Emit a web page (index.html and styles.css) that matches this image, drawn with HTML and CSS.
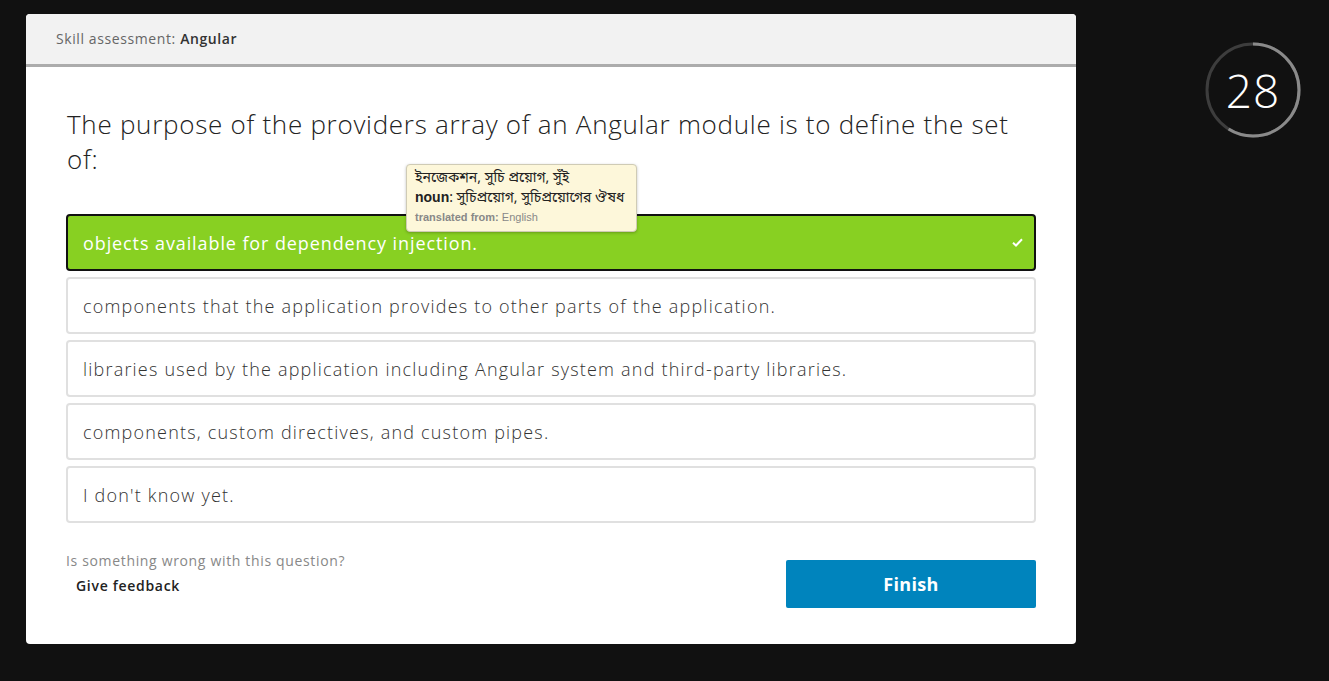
FILE: index.html
```html
<!DOCTYPE html>
<html lang="en">
<head>
<meta charset="utf-8">
<title>Skill assessment: Angular</title>
<link rel="stylesheet" href="styles.css">
</head>
<body>
<div class="page">
  <main class="card">
    <header class="card-header">Skill assessment: <strong>Angular</strong></header>
    <section class="card-body">
      <h1 class="question">The purpose of the providers array of an Angular module is to define the set of:</h1>
      <div class="options">
        <div class="option selected">
          <span>objects available for dependency injection.</span>
          <svg class="check" width="11" height="9" viewBox="0 0 11 9"><path d="M1 4.8 L4 7.5 L10 1.2" fill="none" stroke="#fff" stroke-width="2"/></svg>
          <div class="tooltip">
            <div class="tt-line">ইনজেকশন, সুচি প্রয়োগ, সুঁই</div>
            <div class="tt-line"><b>noun</b>: সুচিপ্রয়োগ, সুচিপ্রয়োগের ঔষধ</div>
            <div class="tt-from"><b>translated from:</b> English</div>
          </div>
        </div>
        <div class="option"><span>components that the application provides to other parts of the application.</span></div>
        <div class="option"><span>libraries used by the application including Angular system and third-party libraries.</span></div>
        <div class="option"><span>components, custom directives, and custom pipes.</span></div>
        <div class="option"><span>I don't know yet.</span></div>
      </div>
      <div class="footer">
        <div class="feedback">
          <div class="feedback-q">Is something wrong with this question?</div>
          <div class="feedback-link">Give feedback</div>
        </div>
        <button class="finish">Finish</button>
      </div>
    </section>
  </main>
  <div class="timer">
    <svg class="ring" width="96" height="96" viewBox="0 0 96 96">
      <circle cx="48" cy="48" r="46" fill="none" stroke="#3d3d3d" stroke-width="3"/>
      <circle cx="48" cy="48" r="46" fill="none" stroke="#8a8a8a" stroke-width="3" stroke-dasharray="170 400" transform="rotate(-90 48 48)"/>
    </svg>
    <span class="timer-num">28</span>
  </div>
</div>
</body>
</html>
```

FILE: styles.css
```css
html, body {
  margin: 0;
  padding: 0;
  background: #111111;
  height: 100%;
}
body {
  font-family: "Open Sans", "Liberation Sans", sans-serif;
}
.page {
  display: flex;
  align-items: flex-start;
  gap: 129px;
  padding: 14px 0 0 26px;
}
.card {
  width: 1050px;
  height: 630px;
  background: #ffffff;
  border-radius: 4px;
}
.card-header {
  height: 50px;
  line-height: 50px;
  padding-left: 30px;
  background: #f2f2f2;
  border-bottom: 3px solid #acacac;
  border-radius: 4px 4px 0 0;
  font-size: 14px;
  letter-spacing: 0.6px;
  color: #666;
}
.card-header strong {
  color: #333;
  font-weight: 600;
}
.card-body {
  padding: 40px 40px 0 40px;
}
.question {
  margin: 0 0 37px 1px;
  font-size: 26px;
  line-height: 35px;
  font-weight: 300;
  letter-spacing: 0.72px;
  color: #222;
  width: 960px;
}
.options {
  display: flex;
  flex-direction: column;
  gap: 6px;
}
.option {
  position: relative;
  box-sizing: border-box;
  width: 970px;
  height: 57px;
  border: 2px solid #e0e0e0;
  border-radius: 4px;
  padding: 0 15px;
  display: flex;
  align-items: center;
  justify-content: space-between;
  font-size: 18px;
  font-weight: 300;
  letter-spacing: 1.2px;
  color: #333;
}
.option.selected {
  background: #88d022;
  border-color: #111;
  color: #fff;
  font-weight: 400;
  letter-spacing: 0.9px;
}
.check {
  margin-right: -4px;
}
.tooltip {
  position: absolute;
  left: 338px;
  top: -52px;
  width: 213px;
  padding: 4px 8px 5px 8px;
  background: #fdf7da;
  border: 1px solid #cfcbb5;
  border-radius: 4px;
  box-shadow: 0 1px 3px rgba(0,0,0,0.25);
  color: #222;
  font-family: "Noto Sans Bengali", "Lohit Bengali", "Noto Sans", sans-serif;
  font-size: 14px;
  font-weight: 400;
  line-height: 19px;
  letter-spacing: 0;
  z-index: 2;
}
.tt-line b {
  font-family: "Liberation Sans", Arial, sans-serif;
  font-weight: 700;
}
.tt-from {
  font-family: "Liberation Sans", Arial, sans-serif;
  font-size: 11px;
  line-height: 18px;
  color: #888;
}
.tt-from b {
  font-weight: 700;
}
.footer {
  display: flex;
  justify-content: space-between;
  align-items: flex-start;
  margin-top: 28px;
  width: 970px;
}
.feedback-q {
  font-size: 14px;
  line-height: 20px;
  color: #888;
  font-weight: 400;
  letter-spacing: 0.66px;
}
.feedback-link {
  margin-top: 5px;
  padding-left: 10px;
  font-size: 14px;
  line-height: 20px;
  color: #222;
  font-weight: 600;
  letter-spacing: 0.7px;
}
.finish {
  margin-top: 9px;
  width: 250px;
  height: 48px;
  border: none;
  border-radius: 2px;
  background: #0084bd;
  color: #fff;
  font-family: "Open Sans", "Liberation Sans", sans-serif;
  font-size: 18px;
  font-weight: 700;
  letter-spacing: 0.3px;
}
.timer {
  position: relative;
  width: 96px;
  height: 96px;
  margin-top: 28px;
  display: flex;
  align-items: center;
  justify-content: center;
}
.ring {
  position: absolute;
  left: 0;
  top: 0;
}
.timer-num {
  position: relative;
  font-family: "Open Sans", sans-serif;
  font-weight: 300;
  font-size: 46px;
  color: #fff;
  letter-spacing: 1px;
}
```
